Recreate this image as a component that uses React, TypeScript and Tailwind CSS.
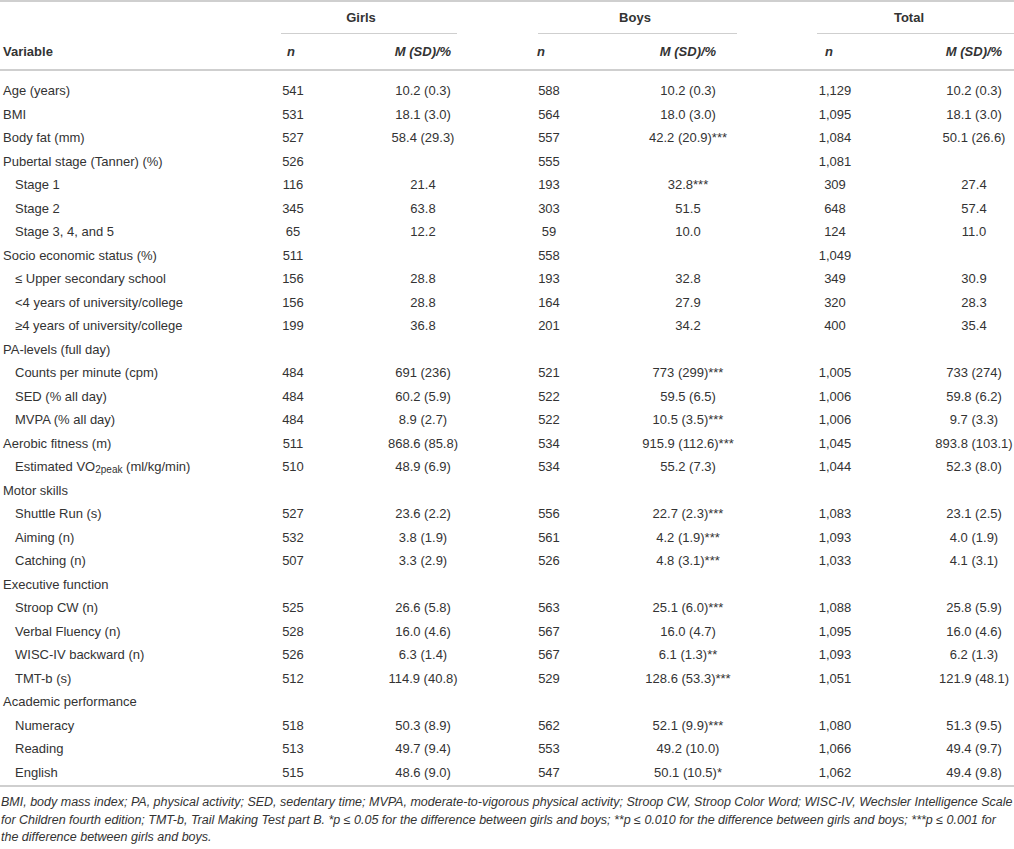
type Row = {
  label: React.ReactNode;
  indent?: boolean;
  vals?: [string, string, string, string, string, string];
};

const rows: Row[] = [
  { label: 'Age (years)', vals: ['541', '10.2 (0.3)', '588', '10.2 (0.3)', '1,129', '10.2 (0.3)'] },
  { label: 'BMI', vals: ['531', '18.1 (3.0)', '564', '18.0 (3.0)', '1,095', '18.1 (3.0)'] },
  { label: 'Body fat (mm)', vals: ['527', '58.4 (29.3)', '557', '42.2 (20.9)***', '1,084', '50.1 (26.6)'] },
  { label: 'Pubertal stage (Tanner) (%)', vals: ['526', '', '555', '', '1,081', ''] },
  { label: 'Stage 1', indent: true, vals: ['116', '21.4', '193', '32.8***', '309', '27.4'] },
  { label: 'Stage 2', indent: true, vals: ['345', '63.8', '303', '51.5', '648', '57.4'] },
  { label: 'Stage 3, 4, and 5', indent: true, vals: ['65', '12.2', '59', '10.0', '124', '11.0'] },
  { label: 'Socio economic status (%)', vals: ['511', '', '558', '', '1,049', ''] },
  { label: '≤ Upper secondary school', indent: true, vals: ['156', '28.8', '193', '32.8', '349', '30.9'] },
  { label: '<4 years of university/college', indent: true, vals: ['156', '28.8', '164', '27.9', '320', '28.3'] },
  { label: '≥4 years of university/college', indent: true, vals: ['199', '36.8', '201', '34.2', '400', '35.4'] },
  { label: 'PA-levels (full day)' },
  { label: 'Counts per minute (cpm)', indent: true, vals: ['484', '691 (236)', '521', '773 (299)***', '1,005', '733 (274)'] },
  { label: 'SED (% all day)', indent: true, vals: ['484', '60.2 (5.9)', '522', '59.5 (6.5)', '1,006', '59.8 (6.2)'] },
  { label: 'MVPA (% all day)', indent: true, vals: ['484', '8.9 (2.7)', '522', '10.5 (3.5)***', '1,006', '9.7 (3.3)'] },
  { label: 'Aerobic fitness (m)', vals: ['511', '868.6 (85.8)', '534', '915.9 (112.6)***', '1,045', '893.8 (103.1)'] },
  {
    label: (
      <>
        Estimated VO<sub className="text-[10px] relative top-[2px] align-baseline">2peak</sub> (ml/kg/min)
      </>
    ),
    indent: true,
    vals: ['510', '48.9 (6.9)', '534', '55.2 (7.3)', '1,044', '52.3 (8.0)'],
  },
  { label: 'Motor skills' },
  { label: 'Shuttle Run (s)', indent: true, vals: ['527', '23.6 (2.2)', '556', '22.7 (2.3)***', '1,083', '23.1 (2.5)'] },
  { label: 'Aiming (n)', indent: true, vals: ['532', '3.8 (1.9)', '561', '4.2 (1.9)***', '1,093', '4.0 (1.9)'] },
  { label: 'Catching (n)', indent: true, vals: ['507', '3.3 (2.9)', '526', '4.8 (3.1)***', '1,033', '4.1 (3.1)'] },
  { label: 'Executive function' },
  { label: 'Stroop CW (n)', indent: true, vals: ['525', '26.6 (5.8)', '563', '25.1 (6.0)***', '1,088', '25.8 (5.9)'] },
  { label: 'Verbal Fluency (n)', indent: true, vals: ['528', '16.0 (4.6)', '567', '16.0 (4.7)', '1,095', '16.0 (4.6)'] },
  { label: 'WISC-IV backward (n)', indent: true, vals: ['526', '6.3 (1.4)', '567', '6.1 (1.3)**', '1,093', '6.2 (1.3)'] },
  { label: 'TMT-b (s)', indent: true, vals: ['512', '114.9 (40.8)', '529', '128.6 (53.3)***', '1,051', '121.9 (48.1)'] },
  { label: 'Academic performance' },
  { label: 'Numeracy', indent: true, vals: ['518', '50.3 (8.9)', '562', '52.1 (9.9)***', '1,080', '51.3 (9.5)'] },
  { label: 'Reading', indent: true, vals: ['513', '49.7 (9.4)', '553', '49.2 (10.0)', '1,066', '49.4 (9.7)'] },
  { label: 'English', indent: true, vals: ['515', '48.6 (9.0)', '547', '50.1 (10.5)*', '1,062', '49.4 (9.8)'] },
];

const cols = 'grid grid-cols-[263px_60px_200px_52px_226px_68px_145px]';

export default function App() {
  return (
    <div className="w-[1014px] bg-white text-[#333] font-['Liberation_Sans',Arial,sans-serif] text-[13px]">
      <div className="border-t-2 border-[#cfcfcf]" />

      <div className="grid grid-cols-[281px_176px_81px_199px_80px_197px] h-[32px]">
        <div />
        <div className="flex items-center justify-center pr-[16px] font-bold border-b-[1.5px] border-[#cfcfcf]">Girls</div>
        <div />
        <div className="flex items-center justify-center pr-[5px] font-bold border-b-[1.5px] border-[#cfcfcf]">Boys</div>
        <div />
        <div className="flex items-center justify-center pr-[13px] font-bold border-b-[1.5px] border-[#cfcfcf]">Total</div>
      </div>

      <div className={`${cols} h-[37px] items-center font-bold border-b-2 border-[#cfcfcf]`}>
        <div className="pl-[3px]">Variable</div>
        <div className="text-center pr-[4px] italic">n</div>
        <div className="text-center italic">M (SD)/%</div>
        <div className="text-center pr-[16px] italic">n</div>
        <div className="text-center italic">M (SD)/%</div>
        <div className="text-center pr-[12px] italic">n</div>
        <div className="text-center pl-[65px] italic">M (SD)/%</div>
      </div>

      <div className="pt-[8px] pb-[1px] border-b-2 border-[#cfcfcf]">
        {rows.map((r, i) => (
          <div key={i} className={`${cols} h-[23.5px] items-center whitespace-nowrap`}>
            <div className={r.indent ? 'pl-[15px]' : 'pl-[3px]'}>{r.label}</div>
            {r.vals ? (
              <>
                <div className="text-center">{r.vals[0]}</div>
                <div className="text-center">{r.vals[1]}</div>
                <div className="text-center">{r.vals[2]}</div>
                <div className="text-center">{r.vals[3]}</div>
                <div className="text-center">{r.vals[4]}</div>
                <div className="text-center pl-[65px]">{r.vals[5]}</div>
              </>
            ) : null}
          </div>
        ))}
      </div>

      <div className="pt-[7px] pl-[1px] italic text-[12.5px] leading-[17.5px] text-[#333]">
        <div className="whitespace-nowrap">
          BMI, body mass index; PA, physical activity; SED, sedentary time; MVPA, moderate-to-vigorous physical activity; Stroop CW, Stroop Color Word; WISC-IV, Wechsler Intelligence Scale
        </div>
        <div className="whitespace-nowrap">
          for Children fourth edition; TMT-b, Trail Making Test part B. *p ≤ 0.05 for the difference between girls and boys; **p ≤ 0.010 for the difference between girls and boys; ***p ≤ 0.001 for
        </div>
        <div className="whitespace-nowrap">the difference between girls and boys.</div>
      </div>
    </div>
  );
}
